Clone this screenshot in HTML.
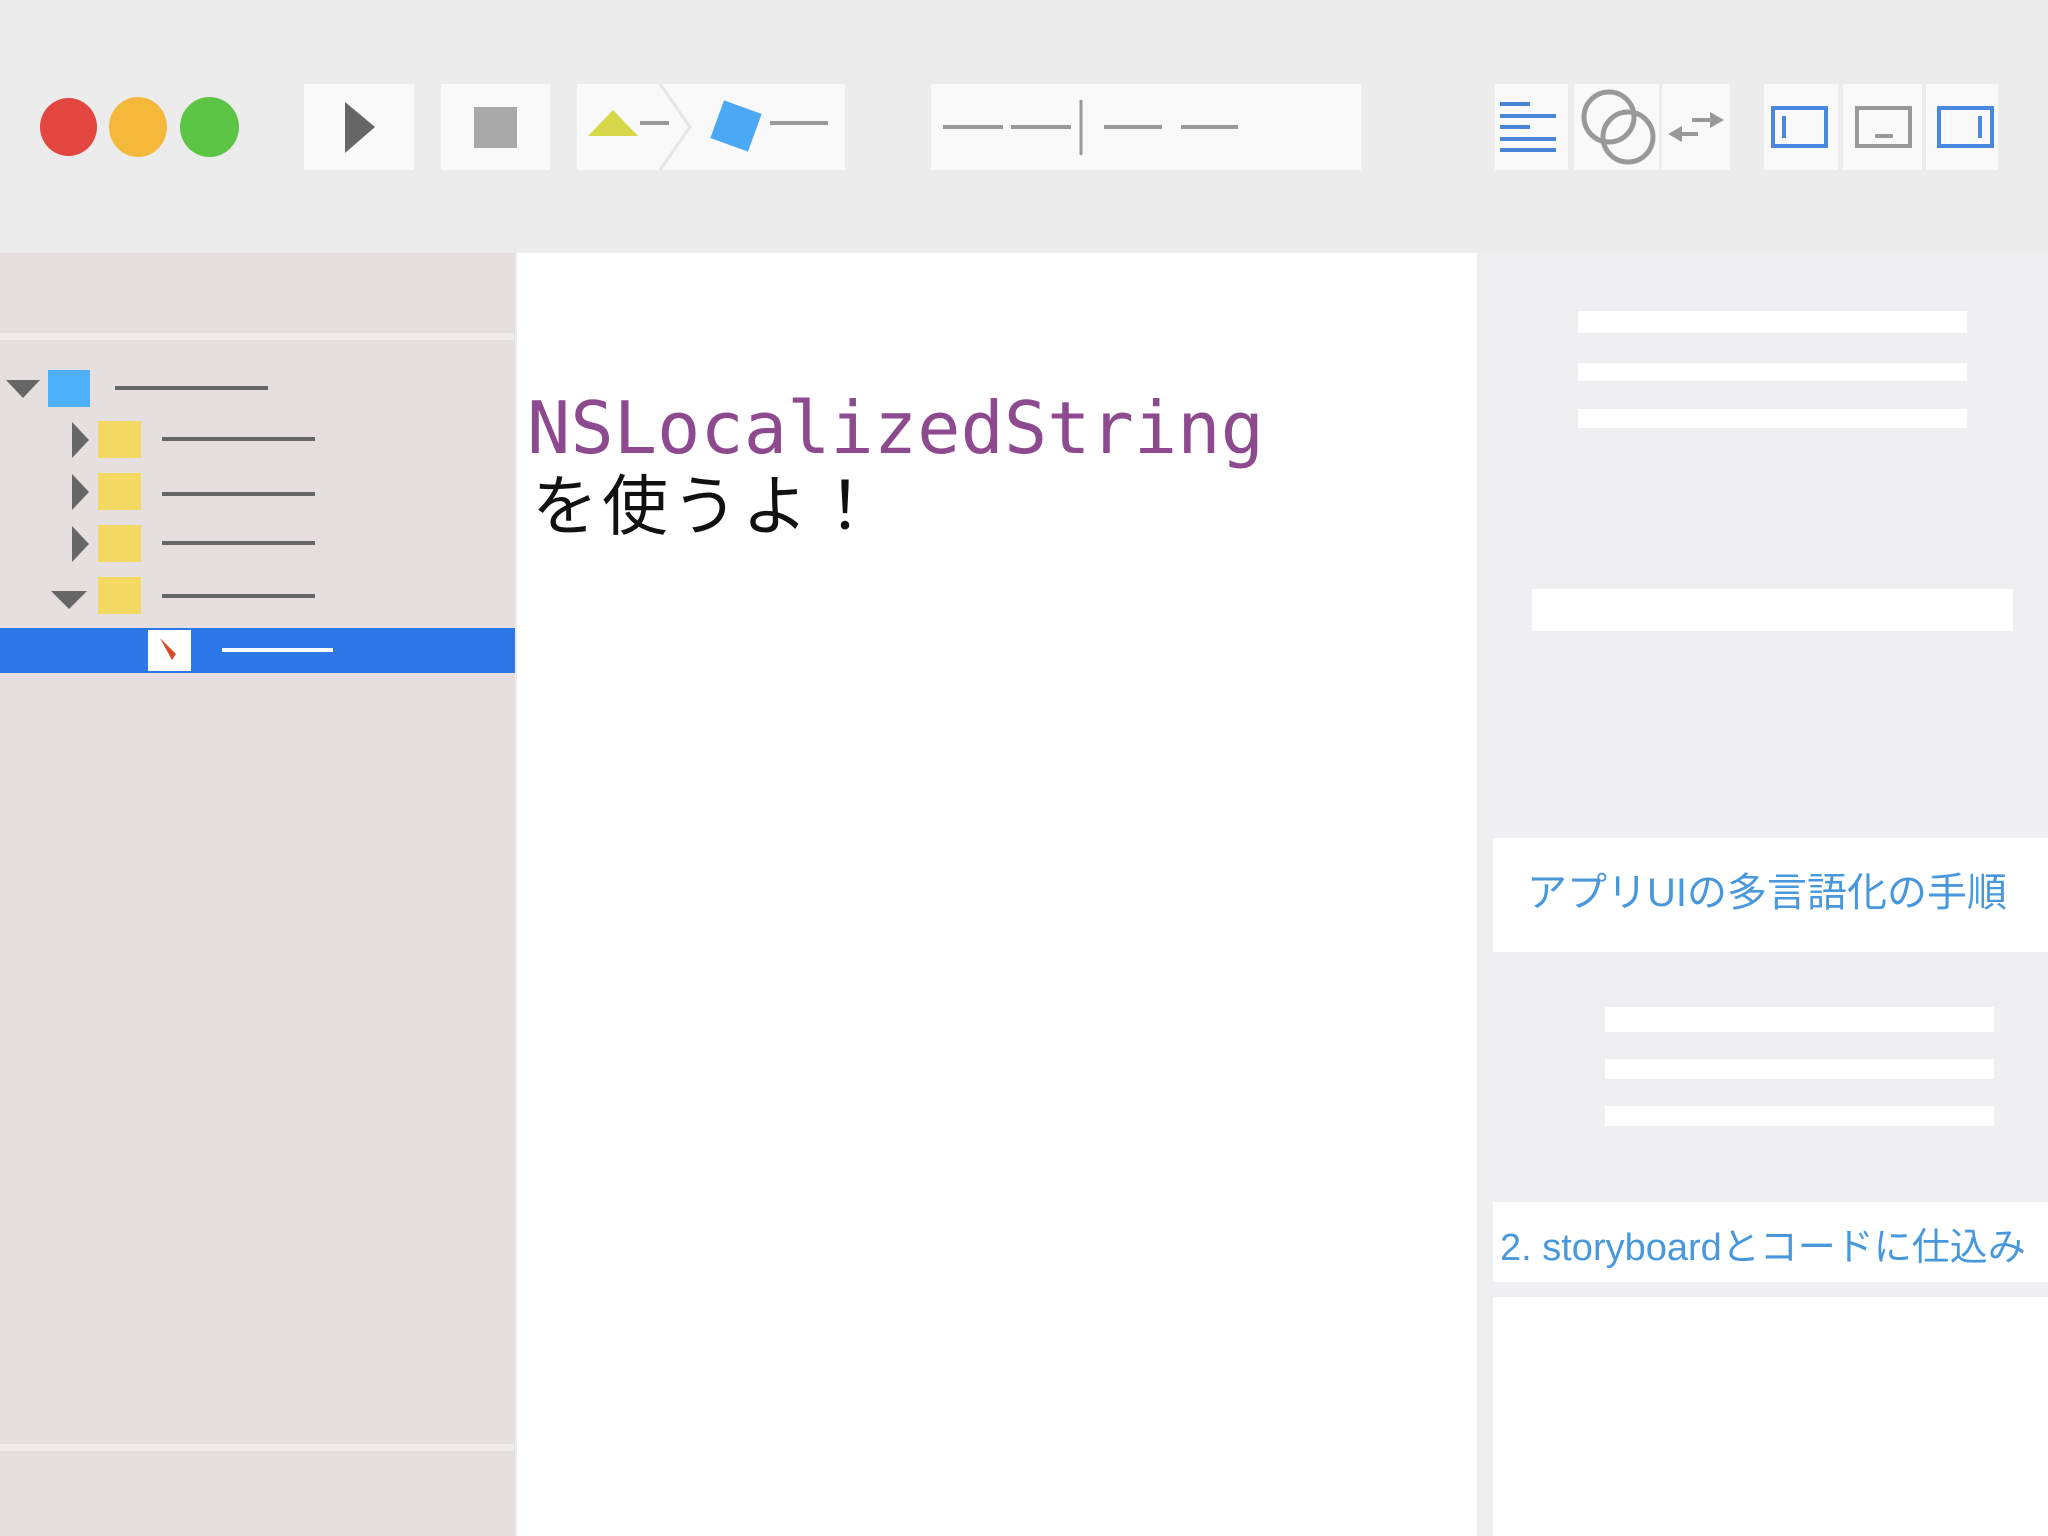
<!DOCTYPE html>
<html><head><meta charset="utf-8"><style>
*{margin:0;padding:0;box-sizing:border-box}
body{width:2048px;height:1536px;background:#ececed;position:relative;overflow:hidden;font-family:"Liberation Sans","Noto Sans CJK JP",sans-serif}
.a{position:absolute}
.btn{position:absolute;background:#f9f9f9;top:84px;height:86px}
.bar{position:absolute;background:#fff}
</style></head><body>
<div class="a" style="left:40px;top:98px;width:57px;height:58px;border-radius:50%;background:#e2463f"></div>
<div class="a" style="left:109px;top:97px;width:58px;height:60px;border-radius:50%;background:#f4b93a"></div>
<div class="a" style="left:180px;top:97px;width:59px;height:60px;border-radius:50%;background:#5cc545"></div>
<div class="btn" style="left:304px;width:110px"></div>
<div class="btn" style="left:441px;width:109px"></div>
<div class="btn" style="left:577px;width:268px"></div>
<div class="btn" style="left:931px;width:430px"></div>
<div class="btn" style="left:1495px;width:73px"></div>
<div class="btn" style="left:1574px;width:85px"></div>
<div class="btn" style="left:1662px;width:68px"></div>
<div class="btn" style="left:1764px;width:74px"></div>
<div class="btn" style="left:1843px;width:79px"></div>
<div class="btn" style="left:1926px;width:72px"></div>
<svg class="a" style="left:0;top:0" width="2048" height="253">
<polygon points="345,102 375,127 345,153" fill="#666"/>
<rect x="474" y="107" width="43" height="41" fill="#a9a9a9"/>
<polygon points="588,136 613,110 638,136" fill="#d6d84a"/>
<line x1="640" y1="123" x2="669" y2="123" stroke="#999" stroke-width="4"/>
<polyline points="660,84 690,127 660,170" fill="none" stroke="#e6e6e6" stroke-width="3"/>
<rect x="716" y="106" width="40" height="40" fill="#4aa8f5" transform="rotate(20 736 126)"/>
<line x1="770" y1="123" x2="828" y2="123" stroke="#999" stroke-width="4"/>
<g stroke="#999" stroke-width="4">
<line x1="943" y1="127" x2="1003" y2="127"/><line x1="1011" y1="127" x2="1071" y2="127"/>
<line x1="1081" y1="100" x2="1081" y2="155" stroke-width="3"/>
<line x1="1104" y1="127" x2="1162" y2="127"/><line x1="1181" y1="127" x2="1238" y2="127"/>
</g>
<g stroke="#4a84d8" stroke-width="4">
<line x1="1500" y1="104" x2="1530" y2="104"/><line x1="1500" y1="116" x2="1556" y2="116"/>
<line x1="1500" y1="127" x2="1530" y2="127"/><line x1="1500" y1="139" x2="1556" y2="139"/>
<line x1="1500" y1="150" x2="1556" y2="150"/>
</g>
<g fill="none" stroke="#999" stroke-width="5">
<circle cx="1609" cy="117" r="25"/><circle cx="1628" cy="137" r="25"/>
</g>
<g stroke="#999" stroke-width="4" fill="#999">
<line x1="1692" y1="120" x2="1712" y2="120"/><polygon points="1724,120 1710,112 1710,128" stroke="none"/>
<line x1="1678" y1="134" x2="1698" y2="134"/><polygon points="1668,134 1682,126 1682,142" stroke="none"/>
</g>
<g fill="none" stroke-width="4">
<rect x="1773" y="108" width="53" height="38" stroke="#4a88dd"/><line x1="1784" y1="116" x2="1784" y2="138" stroke="#4a88dd"/>
<rect x="1857" y="108" width="53" height="38" stroke="#999"/><line x1="1875" y1="136" x2="1893" y2="136" stroke="#999"/>
<rect x="1939" y="108" width="53" height="38" stroke="#4a88dd"/><line x1="1980" y1="116" x2="1980" y2="138" stroke="#4a88dd"/>
</g>
</svg>
<div class="a" style="left:0;top:253px;width:515px;height:1283px;background:#e6dfdf"></div>
<div class="a" style="left:0;top:333px;width:514px;height:7px;background:#f0ecec"></div>
<div class="a" style="left:0;top:1444px;width:514px;height:7px;background:#f0ecec"></div>
<svg class="a" style="left:0;top:360px" width="515" height="320">
<polygon points="6,20 40,20 23,38" fill="#666"/>
<rect x="48" y="10" width="42" height="37" fill="#4eb0f7"/>
<rect x="115" y="26" width="153" height="4" fill="#666"/>
<g fill="#666">
<polygon points="72,62 89,80 72,98"/><polygon points="72,114 89,132 72,150"/><polygon points="72,166 89,184 72,202"/>
<polygon points="51,231 87,231 69,249"/>
</g>
<g fill="#f3d862">
<rect x="98" y="61" width="43" height="37"/><rect x="98" y="113" width="43" height="37"/><rect x="98" y="165" width="43" height="37"/><rect x="98" y="217" width="43" height="37"/>
</g>
<g fill="#666">
<rect x="162" y="77" width="153" height="4"/><rect x="162" y="132" width="153" height="4"/><rect x="162" y="181" width="153" height="4"/><rect x="162" y="234" width="153" height="4"/>
</g>
<rect x="0" y="268" width="515" height="45" fill="#2e77e8"/>
<rect x="148" y="270" width="43" height="41" fill="#fff"/>
<polygon points="160,278 172,300 176,294" fill="#d84a2a"/>
<rect x="222" y="288" width="111" height="4" fill="#fff"/>
</svg>
<div class="a" style="left:517px;top:253px;width:960px;height:1283px;background:#fff"></div>
<div class="a" style="left:527px;top:378px;font-family:'DejaVu Sans Mono','Liberation Mono',monospace;font-size:72px;color:#8e4a8f;line-height:100px;white-space:nowrap">NSLocalizedString</div>
<div class="a" style="left:532px;top:456px;font-family:'Noto Sans CJK JP',sans-serif;font-size:66px;color:#111;line-height:90px;letter-spacing:4px;white-space:nowrap">を使うよ！</div>
<div class="a" style="left:1477px;top:253px;width:571px;height:1283px;background:#efeff1"></div>
<div class="bar" style="left:1578px;top:311px;width:389px;height:22px"></div>
<div class="bar" style="left:1578px;top:363px;width:389px;height:18px"></div>
<div class="bar" style="left:1578px;top:409px;width:389px;height:19px"></div>
<div class="bar" style="left:1532px;top:589px;width:481px;height:42px"></div>
<div class="bar" style="left:1493px;top:838px;width:555px;height:114px"></div>
<div class="a" style="left:1527px;top:863px;font-size:40px;color:#4a98dc;white-space:nowrap;line-height:60px">アプリUIの多言語化の手順</div>
<div class="bar" style="left:1605px;top:1007px;width:389px;height:25px"></div>
<div class="bar" style="left:1605px;top:1059px;width:389px;height:20px"></div>
<div class="bar" style="left:1605px;top:1106px;width:389px;height:20px"></div>
<div class="bar" style="left:1493px;top:1202px;width:555px;height:80px"></div>
<div class="a" style="left:1500px;top:1220px;font-size:38px;color:#4a98dc;white-space:nowrap;line-height:56px">2. storyboardとコードに仕込み</div>
<div class="bar" style="left:1493px;top:1297px;width:555px;height:239px"></div>
</body></html>
